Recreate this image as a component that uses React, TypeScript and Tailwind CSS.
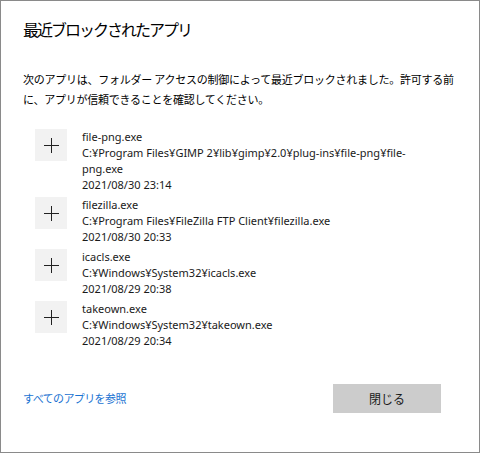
import React from "react";

type BlockedApp = {
  name: string;
  path: string[];
  time: string;
};

const apps: BlockedApp[] = [
  {
    name: "file-png.exe",
    path: ["C:¥Program Files¥GIMP 2¥lib¥gimp¥2.0¥plug-ins¥file-png¥file-", "png.exe"],
    time: "2021/08/30 23:14",
  },
  {
    name: "filezilla.exe",
    path: ["C:¥Program Files¥FileZilla FTP Client¥filezilla.exe"],
    time: "2021/08/30 20:33",
  },
  {
    name: "icacls.exe",
    path: ["C:¥Windows¥System32¥icacls.exe"],
    time: "2021/08/29 20:38",
  },
  {
    name: "takeown.exe",
    path: ["C:¥Windows¥System32¥takeown.exe"],
    time: "2021/08/29 20:34",
  },
];

function PlusTile() {
  return (
    <div className="w-8 h-8 shrink-0 bg-[#f2f2f2] flex items-center justify-center">
      <svg width="15" height="15" viewBox="0 0 15 15">
        <path d="M7.5 0V15M0 7.5H15" stroke="#222" strokeWidth="1" />
      </svg>
    </div>
  );
}

export default function App() {
  return (
    <div
      className="w-[480px] h-[453px] bg-white border border-[#8a8a8a] flex flex-col text-black"
      style={{ fontFamily: '"Noto Sans CJK JP", "Noto Sans", sans-serif' }}
    >
      <h1 className="pl-[22px] pt-[16px] text-[16px] leading-[24px] tracking-[-2px] font-normal">
        最近ブロックされたアプリ
      </h1>

      <p className="pl-[22px] mt-[28px] text-[11px] leading-[20px] tracking-[-0.25px] whitespace-nowrap">
        次のアプリは、フォルダー アクセスの制御によって最近ブロックされました。許可する前
        <br />
        に、アプリが信頼できることを確認してください。
      </p>

      <ul className="mt-[20px] pl-[34px] flex flex-col gap-[4px]">
        {apps.map((app) => (
          <li key={app.name} className="flex gap-[15px]">
            <PlusTile />
            <div
              className="text-[11px] leading-[16px] text-[#1a1a1a] whitespace-nowrap"
              style={{ fontFamily: '"Noto Sans", "Noto Sans CJK JP", sans-serif' }}
            >
              <div>{app.name}</div>
              {app.path.map((line) => (
                <div key={line}>{line}</div>
              ))}
              <div>{app.time}</div>
            </div>
          </li>
        ))}
      </ul>

      <div className="mt-auto mb-[39px] pl-[22px] pr-[38px] flex items-center justify-between">
        <a href="#" className="text-[11px] text-[#1a73d2] tracking-[-0.6px]">
          すべてのアプリを参照
        </a>
        <button className="w-[108px] h-[29px] bg-[#cccccc] text-[12px] text-[#1a1a1a]">
          閉じる
        </button>
      </div>
    </div>
  );
}
